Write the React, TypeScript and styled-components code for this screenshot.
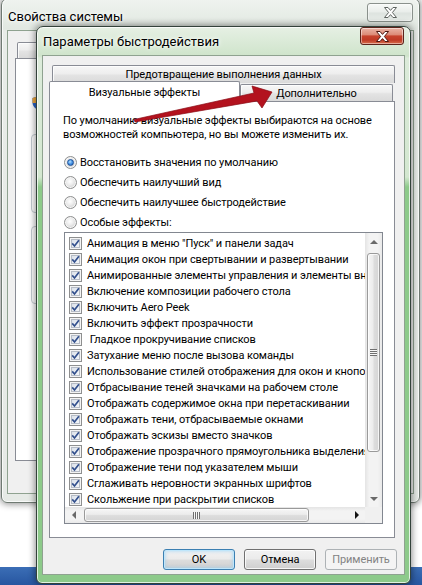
import styled, { createGlobalStyle, css } from 'styled-components';

const GlobalStyle = createGlobalStyle`
  html, body {
    margin: 0;
    padding: 0;
    background: #ffffff;
  }
  body {
    font-family: Roboto, "Liberation Sans", "Noto Sans", sans-serif;
    font-size: 11px;
    letter-spacing: -0.1px;
    color: #000;
  }
`;

// Desktop canvas that holds the windows
const Desktop = styled.div`
  position: relative;
  width: 422px;
  height: 585px;
  overflow: hidden;
  background: #ffffff;
  display: flex;
  flex-direction: column;
  justify-content: flex-end;
`;

const Taskbar = styled.div`
  height: 18px;
  background: linear-gradient(180deg, #3b6eb6 0%, #2756a0 100%);
`;

interface WindowProps {
  $x: number;
  $y: number;
  $w: number;
  $h: number;
  $active?: boolean;
}

const Window = styled.div<WindowProps>`
  position: absolute;
  isolation: isolate;
  left: ${(p) => p.$x}px;
  top: ${(p) => p.$y}px;
  width: ${(p) => p.$w}px;
  height: ${(p) => p.$h}px;
  box-sizing: border-box;
  display: flex;
  flex-direction: column;
  padding: 0 6px 9px;
  border: 1px solid ${(p) => (p.$active ? '#33423a' : '#6f7a72')};
  border-radius: 7px 7px 6px 6px;
  box-shadow:
    inset 0 0 0 1px rgba(255, 255, 255, 0.75),
    0 0 7px 1px rgba(0, 0, 0, 0.45);
  background: ${(p) =>
    p.$active
      ? 'linear-gradient(180deg, #e6f0e4 0px, #cfe4cb 29px, #dcebda 31px, #d3e7d0 150px, #8dca8a 160px, #8dca8a 100%)'
      : 'linear-gradient(180deg, #eff3ef 0px, #e1e8e1 30px, #e8ece8 32px, #e6eae6 100%)'};
`;

const TitleBar = styled.div<{ $h: number }>`
  flex: none;
  height: ${(p) => p.$h}px;
  display: flex;
  justify-content: space-between;
  align-items: flex-start;
`;

const Title = styled.div<{ $pad: number }>`
  padding-top: ${(p) => p.$pad}px;
  line-height: 16px;
  font-size: 13px;
  letter-spacing: 0;
  white-space: nowrap;
  text-shadow:
    0 0 6px #ffffff,
    0 0 3px #ffffff;
`;

interface CloseProps {
  $w: number;
  $h: number;
  $mt: number;
  $active?: boolean;
}

const CloseButton = styled.div<CloseProps>`
  flex: none;
  box-sizing: border-box;
  width: ${(p) => p.$w}px;
  height: ${(p) => p.$h}px;
  margin-top: ${(p) => p.$mt}px;
  display: flex;
  align-items: center;
  justify-content: center;
  border-radius: 3px;
  border: 1px solid ${(p) => (p.$active ? '#5b231b' : '#8a918c')};
  box-shadow: inset 0 0 0 1px rgba(255, 255, 255, 0.45);
  background: ${(p) =>
    p.$active
      ? 'linear-gradient(180deg, #eab4a6 0%, #dd8b77 42%, #c7432d 50%, #bf3a25 75%, #d8704e 100%)'
      : 'linear-gradient(180deg, #f7f9f7 0%, #e9edea 48%, #dde3df 52%, #e7ece8 100%)'};
`;

const CloseGlyph = ({ stroke }: { stroke: string }) => (
  <svg width="13" height="11" viewBox="0 0 13 11">
    <path
      d="M0.5 0.5 H4 L6.5 3.4 L9 0.5 H12.5 L8.4 5.5 L12.5 10.5 H9 L6.5 7.6 L4 10.5 H0.5 L4.6 5.5 Z"
      fill="#ffffff"
      stroke={stroke}
      strokeWidth="1"
      strokeLinejoin="round"
    />
  </svg>
);

interface ClientProps {
  $pt: number;
  $pr: number;
  $pl: number;
}

const Client = styled.div<ClientProps>`
  flex: 1;
  min-height: 0;
  display: flex;
  flex-direction: column;
  padding: ${(p) => `${p.$pt}px ${p.$pr}px 0 ${p.$pl}px`};
  background: #f0f0f0;
  box-shadow: 0 0 0 1px #8fa290;
`;

// Tabs
const TabRow = styled.div<{ $indent?: number; $h: number }>`
  flex: none;
  display: flex;
  align-items: flex-end;
  height: ${(p) => p.$h}px;
  padding-left: ${(p) => p.$indent ?? 0}px;
`;

const Tab = styled.div<{ $w?: number; $h: number; $selected?: boolean }>`
  box-sizing: border-box;
  ${(p) => (p.$w ? `width: ${p.$w}px; flex: none;` : 'flex: 1;')}
  height: ${(p) => p.$h}px;
  display: flex;
  align-items: center;
  justify-content: center;
  white-space: nowrap;
  overflow: hidden;
  border: 1px solid #898c95;
  border-bottom: none;
  border-radius: 2px 2px 0 0;
  ${(p) =>
    p.$selected
      ? css`
          position: relative;
          z-index: 1;
          margin-bottom: -1px;
          background: #ffffff;
        `
      : css`
          background: linear-gradient(180deg, #f7f7f7 0%, #eeeeee 45%, #e3e3e3 55%, #dadada 100%);
          box-shadow: inset 1px 1px 0 rgba(255, 255, 255, 0.8);
        `}
`;

const Panel = styled.div<{ $h: number }>`
  flex: none;
  box-sizing: border-box;
  height: ${(p) => p.$h}px;
  background: #ffffff;
  border: 1px solid #898c95;
  display: flex;
  flex-direction: column;
`;

const EffectsPanel = styled(Panel)`
  padding: 12px 10px 0 13px;
`;

const Intro = styled.p`
  margin: 0;
  line-height: 14px;
  white-space: nowrap;
`;

const RadioList = styled.div`
  margin-top: 10px;
  display: flex;
  flex-direction: column;
`;

const RadioRow = styled.label`
  height: 20px;
  display: flex;
  align-items: center;
  gap: 3px;
  padding-left: 1px;
  white-space: nowrap;
`;

const RadioCircle = styled.span<{ $checked?: boolean }>`
  flex: none;
  position: relative;
  box-sizing: border-box;
  width: 13px;
  height: 13px;
  border-radius: 50%;
  border: 1px solid #8e8f8f;
  background: radial-gradient(circle at 45% 40%, #ffffff 0%, #eeeeee 35%, #d2d2d2 75%, #c4c4c4 100%);
  box-shadow: inset 0 0 0 1px #f6f6f6;
  ${(p) =>
    p.$checked &&
    css`
      &::after {
        content: '';
        position: absolute;
        left: 2px;
        top: 2px;
        width: 7px;
        height: 7px;
        box-sizing: border-box;
        border-radius: 50%;
        border: 1px solid #1c4f96;
        background: radial-gradient(circle at 40% 35%, #b9e2ff 0%, #4f9ae8 45%, #1f5fb8 100%);
      }
    `}
`;

// List of effects with scrollbars
const ListBox = styled.div`
  flex: none;
  box-sizing: border-box;
  margin-left: 1px;
  width: 319px;
  height: 292px;
  border: 1px solid #828790;
  display: grid;
  grid-template-columns: 300px 17px;
  grid-template-rows: 274px 16px;
  background: #ffffff;
`;

const Items = styled.div`
  overflow: hidden;
  padding-top: 2px;
`;

const Item = styled.div`
  height: 16px;
  display: flex;
  align-items: center;
  gap: 5px;
  padding-left: 4px;
  white-space: pre;
`;

const CheckBox = styled.span`
  flex: none;
  box-sizing: border-box;
  width: 13px;
  height: 13px;
  display: flex;
  align-items: center;
  justify-content: center;
  border: 1px solid #8e8f8f;
  background: linear-gradient(135deg, #d3dae4 0%, #e9edf2 50%, #f8f9fb 100%);
  box-shadow:
    inset 0 0 0 1px #f4f4f4,
    inset 0 0 0 2px #b6bcc6;
`;

const CheckMark = () => (
  <svg width="9" height="9" viewBox="0 0 9 9">
    <path d="M1.2 4.4 L3.5 7 L7.9 1.3" fill="none" stroke="#33508d" strokeWidth="1.7" />
  </svg>
);

const VScroll = styled.div`
  grid-row: 1;
  grid-column: 2;
  display: flex;
  flex-direction: column;
  background: linear-gradient(90deg, #e4e4e4 0%, #f3f3f3 25%, #f3f3f3 75%, #e9e9e9 100%);
`;

const HScroll = styled.div`
  grid-row: 2;
  grid-column: 1;
  display: flex;
  align-items: center;
  background: linear-gradient(180deg, #e4e4e4 0%, #f3f3f3 25%, #f3f3f3 75%, #e9e9e9 100%);
`;

const ScrollCorner = styled.div`
  grid-row: 2;
  grid-column: 2;
  background: #f0f0f0;
`;

const ScrollArrow = styled.div<{ $horizontal?: boolean }>`
  flex: none;
  ${(p) => (p.$horizontal ? 'width: 17px; align-self: stretch;' : 'height: 17px;')}
  display: flex;
  align-items: center;
  justify-content: center;
`;

const ScrollTrack = styled.div`
  flex: 1;
  display: flex;
  min-width: 0;
  min-height: 0;
`;

const ArrowGlyph = styled.span<{ $dir: 'up' | 'down' | 'left' | 'right'; $dark?: boolean }>`
  width: 0;
  height: 0;
  ${(p) => {
    const c = p.$dark ? '#141414' : '#6a6a6a';
    switch (p.$dir) {
      case 'up':
        return `border-left: 4px solid transparent; border-right: 4px solid transparent; border-bottom: 4px solid ${c};`;
      case 'down':
        return `border-left: 4px solid transparent; border-right: 4px solid transparent; border-top: 4px solid ${c};`;
      case 'left':
        return `border-top: 4px solid transparent; border-bottom: 4px solid transparent; border-right: 4px solid ${c};`;
      default:
        return `border-top: 4px solid transparent; border-bottom: 4px solid transparent; border-left: 4px solid ${c};`;
    }
  }}
`;

const Thumb = styled.div<{ $horizontal?: boolean; $len: number; $offset: number }>`
  flex: none;
  box-sizing: border-box;
  display: flex;
  align-items: center;
  justify-content: center;
  border: 1px solid #9a9a9a;
  border-radius: 3px;
  box-shadow: inset 0 0 0 1px rgba(255, 255, 255, 0.75);
  ${(p) =>
    p.$horizontal
      ? css`
          width: ${p.$len}px;
          height: 14px;
          margin-left: ${p.$offset}px;
          background: linear-gradient(180deg, #f6f6f6 0%, #ececec 45%, #dddddd 55%, #d5d5d5 100%);
        `
      : css`
          width: 13px;
          height: ${p.$len}px;
          margin-top: ${p.$offset}px;
          margin-left: 2px;
          background: linear-gradient(90deg, #f6f6f6 0%, #ececec 45%, #dddddd 55%, #d5d5d5 100%);
        `}
`;

const Grip = styled.span<{ $horizontal?: boolean }>`
  width: 7px;
  height: 7px;
  background: repeating-linear-gradient(
    ${(p) => (p.$horizontal ? '90deg' : '180deg')},
    #6f6f6f 0 1px,
    #f6f6f6 1px 2px
  );
`;

// Dialog buttons
const ButtonRow = styled.div`
  flex: none;
  display: flex;
  justify-content: flex-end;
  gap: 9px;
  margin-top: 11px;
  margin-right: -2px;
`;

const Button = styled.button<{ $default?: boolean }>`
  width: 72px;
  height: 21px;
  box-sizing: border-box;
  padding: 0;
  font-family: inherit;
  font-size: 11px;
  letter-spacing: -0.1px;
  color: #000;
  border: 1px solid #707070;
  border-radius: 3px;
  background: linear-gradient(180deg, #f2f2f2 0%, #ebebeb 48%, #dddddd 52%, #cfcfcf 100%);
  box-shadow: inset 0 0 0 1px rgba(255, 255, 255, 0.8);
  ${(p) =>
    p.$default &&
    css`
      border-color: #3c7fb1;
      box-shadow:
        inset 0 0 0 1px #bfe6fb,
        inset 0 0 3px 2px rgba(140, 205, 245, 0.45);
    `}
  &:disabled {
    border-color: #adb2b5;
    background: #f4f4f4;
    color: #838383;
    box-shadow: none;
  }
`;

// Background window bits
const BackPanel = styled(Panel)`
  padding: 0 0 0 15px;
`;

const Shield = styled.svg`
  margin-top: 37px;
  margin-left: 1px;
`;

const GroupBox = styled.div<{ $h: number; $mt: number }>`
  flex: none;
  box-sizing: border-box;
  height: ${(p) => p.$h}px;
  margin-top: ${(p) => p.$mt}px;
  margin-right: 15px;
  border: 1px solid #c5ccd2;
  border-radius: 4px;
  box-shadow: inset 1px 1px 0 #ffffff;
`;

const ArrowOverlay = styled.svg`
  position: absolute;
  left: 0;
  top: 0;
  pointer-events: none;
`;

const effects = [
  'Анимация в меню "Пуск" и панели задач',
  'Анимация окон при свертывании и развертывании',
  'Анимированные элементы управления и элементы внутри окна',
  'Включение композиции рабочего стола',
  'Включить Aero Peek',
  'Включить эффект прозрачности',
  ' Гладкое прокручивание списков',
  'Затухание меню после вызова команды',
  'Использование стилей отображения для окон и кнопок',
  'Отбрасывание теней значками на рабочем столе',
  'Отображать содержимое окна при перетаскивании',
  'Отображать тени, отбрасываемые окнами',
  'Отображать эскизы вместо значков',
  'Отображение прозрачного прямоугольника выделения',
  'Отображение тени под указателем мыши',
  'Сглаживать неровности экранных шрифтов',
  'Скольжение при раскрытии списков',
];

const modes = [
  { label: 'Восстановить значения по умолчанию', checked: true },
  { label: 'Обеспечить наилучший вид', checked: false },
  { label: 'Обеспечить наилучшее быстродействие', checked: false },
  { label: 'Особые эффекты:', checked: false },
];

export default function App() {
  return (
    <>
      <GlobalStyle />
      <Desktop>
        <Taskbar />

        {/* the parent window, mostly covered by the dialog */}
        <Window $x={1} $y={-2} $w={419} $h={505}>
          <TitleBar $h={32}>
            <Title $pad={10}>Свойства системы</Title>
            <CloseButton $w={46} $h={19} $mt={4}>
              <CloseGlyph stroke="#5e6460" />
            </CloseButton>
          </TitleBar>
          <Client $pt={11} $pr={7} $pl={7}>
            <TabRow $h={16} $indent={2}>
              <Tab $w={140} $h={16} />
              <Tab $w={90} $h={16} />
              <Tab $w={95} $h={18} $selected />
            </TabRow>
            <BackPanel $h={403}>
              <Shield width="11" height="14" viewBox="0 0 11 14">
                <path d="M5.5 0.5 L10.5 2 V7 C10.5 10 8 12.3 5.5 13.5 C3 12.3 0.5 10 0.5 7 V2 Z" fill="#2c66c8" />
                <path d="M0.5 2 L5.5 0.5 V7 H0.5 Z" fill="#f2a93a" />
                <path d="M5.5 7 H10.5 C10.5 10 8 12.3 5.5 13.5 Z" fill="#f2a93a" />
              </Shield>
              <GroupBox $h={79} $mt={24} />
              <GroupBox $h={78} $mt={13} />
            </BackPanel>
          </Client>
        </Window>

        <Window $x={36} $y={26} $w={375} $h={558} $active>
          <TitleBar $h={29}>
            <Title $pad={7}>Параметры быстродействия</Title>
            <CloseButton $w={44} $h={18} $mt={0} $active>
              <CloseGlyph stroke="#4d1710" />
            </CloseButton>
          </TitleBar>
          <Client $pt={9} $pr={9} $pl={6}>
            <TabRow $h={18} $indent={3}>
              <Tab $h={18}>Предотвращение выполнения данных</Tab>
            </TabRow>
            <TabRow $h={18}>
              <Tab $w={191} $h={21} $selected>
                Визуальные эффекты
              </Tab>
              <Tab $w={153} $h={17}>
                Дополнительно
              </Tab>
            </TabRow>
            <EffectsPanel $h={437}>
              <Intro>
                По умолчанию визуальные эффекты выбираются на основе
                <br />
                возможностей компьютера, но вы можете изменить их.
              </Intro>
              <RadioList>
                {modes.map((m) => (
                  <RadioRow key={m.label}>
                    <RadioCircle $checked={m.checked} />
                    {m.label}
                  </RadioRow>
                ))}
              </RadioList>
              <ListBox>
                <Items>
                  {effects.map((e) => (
                    <Item key={e}>
                      <CheckBox>
                        <CheckMark />
                      </CheckBox>
                      {e}
                    </Item>
                  ))}
                </Items>
                <VScroll>
                  <ScrollArrow>
                    <ArrowGlyph $dir="up" />
                  </ScrollArrow>
                  <ScrollTrack>
                    <Thumb $len={199} $offset={3}>
                      <Grip />
                    </Thumb>
                  </ScrollTrack>
                  <ScrollArrow>
                    <ArrowGlyph $dir="down" />
                  </ScrollArrow>
                </VScroll>
                <HScroll>
                  <ScrollArrow $horizontal>
                    <ArrowGlyph $dir="left" />
                  </ScrollArrow>
                  <ScrollTrack>
                    <Thumb $horizontal $len={225} $offset={2}>
                      <Grip $horizontal />
                    </Thumb>
                  </ScrollTrack>
                  <ScrollArrow $horizontal>
                    <ArrowGlyph $dir="right" $dark />
                  </ScrollArrow>
                </HScroll>
                <ScrollCorner />
              </ListBox>
            </EffectsPanel>
            <ButtonRow>
              <Button $default>OK</Button>
              <Button>Отмена</Button>
              <Button disabled>Применить</Button>
            </ButtonRow>
          </Client>
        </Window>

        <ArrowOverlay width="422" height="585" viewBox="0 0 422 585">
          <path
            d="M134 119.5 L254 93 L252 86 L272 92 L262 108 L257 101 L135 122 Z"
            fill="#b3121e"
            stroke="#8a0c15"
            strokeWidth="0.7"
            strokeLinejoin="round"
          />
        </ArrowOverlay>
      </Desktop>
    </>
  );
}
